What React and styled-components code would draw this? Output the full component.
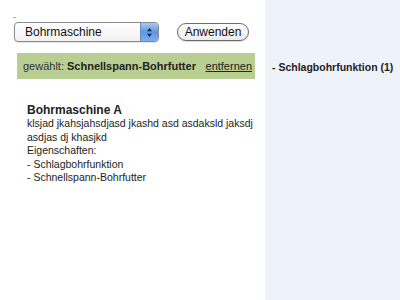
import React from 'react'
import styled, { createGlobalStyle } from 'styled-components'

const GlobalStyle = createGlobalStyle`
  html, body {
    margin: 0;
    padding: 0;
    background: #ffffff;
    font-family: 'Liberation Sans', Arial, sans-serif;
    color: #222222;
  }
`
const Page = styled.div`
  display: flex;
  width: 400px;
  height: 300px;
  overflow: hidden;
`
const Main = styled.div`
  width: 265px;
  flex-shrink: 0;
  padding: 17px 0 0 0;
  box-sizing: border-box;
`
const Sidebar = styled.div`
  flex: 1;
  background: #eef3fb;
  border-left: 2px solid #f2f6fc;
  padding: 61px 0 0 5px;
  font-size: 10.5px;
  font-weight: bold;
  color: #222222;
`
const Mark = styled.div`
  width: 3px;
  height: 1px;
  margin-left: 13px;
  background: #b0b0b0;
`
const Toolbar = styled.div`
  display: flex;
  align-items: center;
  gap: 18px;
  padding: 4px 0 0 14px;
`
const Select = styled.div`
  display: flex;
  align-items: center;
  width: 143px;
  height: 18px;
  border: 1px solid #8a8a8a;
  border-radius: 4px;
  background: linear-gradient(#ffffff, #f1f1f1);
  box-shadow: 0 1px 1px rgba(0, 0, 0, 0.12);
  overflow: hidden;
  font-size: 12px;
  color: #111;
`
const SelectLabel = styled.span`
  flex: 1;
  padding-left: 10px;
`
const Stepper = styled.div`
  width: 17px;
  height: 100%;
  display: flex;
  align-items: center;
  justify-content: center;
  background: linear-gradient(#a9c9f2, #5d97e3 50%, #78aef0);
  border-left: 1px solid #6a8fc0;
`
const Button = styled.div`
  width: 70px;
  height: 16px;
  line-height: 16px;
  text-align: center;
  border: 1px solid #6a6a6a;
  border-radius: 9px;
  background: linear-gradient(#ffffff, #ececec);
  font-size: 12px;
  color: #111;
  box-shadow: 0 1px 1px rgba(0, 0, 0, 0.15);
`
const Selected = styled.div`
  display: flex;
  align-items: center;
  margin: 11px 0 0 17px;
  width: 238px;
  height: 26px;
  padding-left: 6px;
  box-sizing: border-box;
  background: #b8ce93;
  font-size: 11px;
  color: #333333;
  & > b {
    color: #222222;
    margin-left: 3px;
  }
`
const Remove = styled.span`
  margin-left: auto;
  margin-right: 3px;
  text-decoration: underline;
  color: #222222;
`
const Product = styled.div`
  margin: 24px 0 0 27px;
  font-size: 10.5px;
  line-height: 13.5px;
`
const Title = styled.div`
  font-size: 12px;
  font-weight: bold;
  line-height: 14px;
`

export default function App() {
  return (
    <>
      <GlobalStyle />
      <Page>
        <Main>
          <Mark />
          <Toolbar>
            <Select>
              <SelectLabel>Bohrmaschine</SelectLabel>
              <Stepper>
                <svg width="7" height="11" viewBox="0 0 7 11">
                  <path d="M3.5 1 L6 4.2 H1 Z" fill="#1a2a44" />
                  <path d="M3.5 10 L6 6.8 H1 Z" fill="#1a2a44" />
                </svg>
              </Stepper>
            </Select>
            <Button>Anwenden</Button>
          </Toolbar>
          <Selected>
            gewählt: <b>Schnellspann-Bohrfutter</b>
            <Remove>entfernen</Remove>
          </Selected>
          <Product>
            <Title>Bohrmaschine A</Title>
            klsjad jkahsjahsdjasd jkashd asd asdaksld jaksdj asdjas dj khasjkd
            <br />
            Eigenschaften:
            <br />- Schlagbohrfunktion
            <br />- Schnellspann-Bohrfutter
          </Product>
        </Main>
        <Sidebar>- Schlagbohrfunktion (1)</Sidebar>
      </Page>
    </>
  )
}
